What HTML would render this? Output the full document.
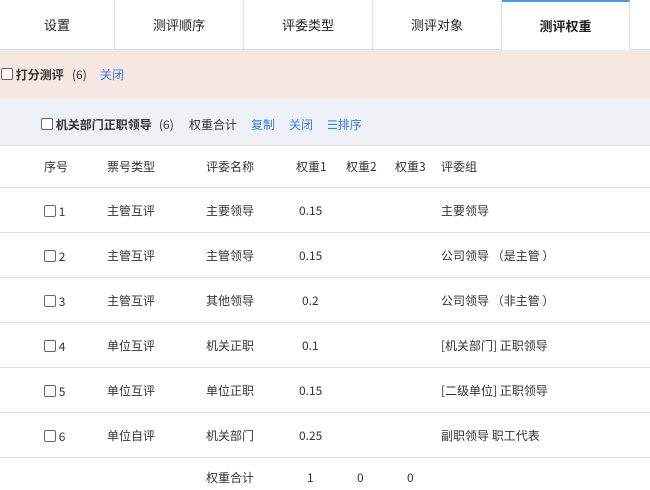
<!DOCTYPE html><html><head><meta charset="utf-8"><style>
*{margin:0;padding:0;box-sizing:border-box}
body{width:650px;height:490px;overflow:hidden;background:#fff;font-family:"Noto Sans CJK SC","Liberation Sans",sans-serif;font-size:12px;color:#333;position:relative}
.tabs{position:absolute;left:0;top:0;width:650px;height:50px;border-bottom:1px solid #ddd}
.tab{position:absolute;top:0;height:49px;line-height:49px;text-align:center;font-size:13px;color:#222;border-right:1px solid #ddd}
.act{background:#fff;border-top:2px solid #4a9be8;height:50px;font-weight:bold;line-height:47px}
.b1{position:absolute;top:50px;left:0;width:650px;height:48px;background:#f7e7e3}
.b2{position:absolute;top:98px;left:0;width:650px;height:48px;background:#eef2f6;border-bottom:1px solid #ddd}
.a{position:absolute;white-space:nowrap;line-height:16px}
.blue{color:#3a7de0}
.cb{display:inline-block;width:12px;height:12px;border:1px solid #666;border-radius:2px;background:#fff;vertical-align:-1px}
.line{position:absolute;left:0;width:650px;height:1px;background:#e0e0e0}
</style></head><body>
<div class="tabs">
<div class="tab" style="left:0;width:115px">设置</div>
<div class="tab" style="left:115px;width:129px">测评顺序</div>
<div class="tab" style="left:244px;width:129px">评委类型</div>
<div class="tab" style="left:373px;width:129px">测评对象</div>
<div class="tab act" style="left:502px;width:128px">测评权重</div>
</div>
<div class="b1"><div class="a" style="left:1px;top:17px"><span class="cb"></span> <b>打分测评</b></div><div class="a" style="left:72px;top:17px">(6)</div><div class="a blue" style="left:100px;top:17px">关闭</div></div>
<div class="b2"><div class="a" style="left:41px;top:19px"><span class="cb"></span> <b>机关部门正职领导</b></div><div class="a" style="left:159px;top:19px">(6)</div><div class="a" style="left:189px;top:19px">权重合计</div><div class="a blue" style="left:251px;top:19px">复制</div><div class="a blue" style="left:289px;top:19px">关闭</div><div class="a blue" style="left:327px;top:19px">☰排序</div></div>
<div class="a" style="left:44px;top:159px">序号</div>
<div class="a" style="left:107px;top:159px">票号类型</div>
<div class="a" style="left:206px;top:159px">评委名称</div>
<div class="a" style="left:296px;top:159px">权重1</div>
<div class="a" style="left:346px;top:159px">权重2</div>
<div class="a" style="left:395px;top:159px">权重3</div>
<div class="a" style="left:441px;top:159px">评委组</div>
<div class="line" style="top:187px"></div>
<div class="line" style="top:232px"></div>
<div class="line" style="top:277px"></div>
<div class="line" style="top:322px"></div>
<div class="line" style="top:367px"></div>
<div class="line" style="top:412px"></div>
<div class="line" style="top:457px"></div>
<div class="a" style="left:44px;top:204px"><span class="cb"></span> 1</div><div class="a" style="left:107px;top:203px">主管互评</div><div class="a" style="left:206px;top:203px">主要领导</div><div class="a" style="left:299px;top:203px">0.15</div><div class="a" style="left:441px;top:203px">主要领导</div>
<div class="a" style="left:44px;top:249px"><span class="cb"></span> 2</div><div class="a" style="left:107px;top:248px">主管互评</div><div class="a" style="left:206px;top:248px">主管领导</div><div class="a" style="left:299px;top:248px">0.15</div><div class="a" style="left:441px;top:248px">公司领导 （是主管 ）</div>
<div class="a" style="left:44px;top:294px"><span class="cb"></span> 3</div><div class="a" style="left:107px;top:293px">主管互评</div><div class="a" style="left:206px;top:293px">其他领导</div><div class="a" style="left:302px;top:293px">0.2</div><div class="a" style="left:441px;top:293px">公司领导 （非主管 ）</div>
<div class="a" style="left:44px;top:339px"><span class="cb"></span> 4</div><div class="a" style="left:107px;top:338px">单位互评</div><div class="a" style="left:206px;top:338px">机关正职</div><div class="a" style="left:302px;top:338px">0.1</div><div class="a" style="left:441px;top:338px">[机关部门] 正职领导</div>
<div class="a" style="left:44px;top:384px"><span class="cb"></span> 5</div><div class="a" style="left:107px;top:383px">单位互评</div><div class="a" style="left:206px;top:383px">单位正职</div><div class="a" style="left:299px;top:383px">0.15</div><div class="a" style="left:441px;top:383px">[二级单位] 正职领导</div>
<div class="a" style="left:44px;top:429px"><span class="cb"></span> 6</div><div class="a" style="left:107px;top:428px">单位自评</div><div class="a" style="left:206px;top:428px">机关部门</div><div class="a" style="left:299px;top:428px">0.25</div><div class="a" style="left:441px;top:428px">副职领导 职工代表</div>
<div class="a" style="left:206px;top:470px">权重合计</div><div class="a" style="left:307px;top:470px">1</div><div class="a" style="left:357px;top:470px">0</div><div class="a" style="left:407px;top:470px">0</div>
</body></html>
